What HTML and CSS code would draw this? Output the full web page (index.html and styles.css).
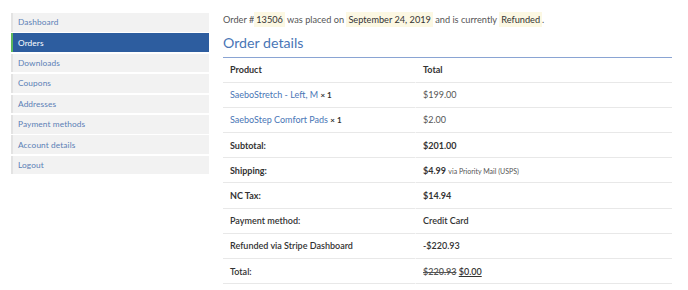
FILE: index.html
```html
<!DOCTYPE html>
<html>
<head>
<meta charset="utf-8">
<link rel="stylesheet" href="styles.css">
</head>
<body>
<div class="page">
  <nav class="side">
    <a class="item">Dashboard</a>
    <a class="item active">Orders</a>
    <a class="item">Downloads</a>
    <a class="item">Coupons</a>
    <a class="item">Addresses</a>
    <a class="item">Payment methods</a>
    <a class="item">Account details</a>
    <a class="item">Logout</a>
  </nav>
  <main class="main">
    <p class="summary">Order #<mark>13506</mark> was placed on <mark>September 24, 2019</mark> and is currently <mark>Refunded</mark>.</p>
    <h2 class="title">Order details</h2>
    <table class="details">
      <colgroup><col class="c1"><col class="c2"></colgroup>
      <thead>
        <tr><th>Product</th><th>Total</th></tr>
      </thead>
      <tbody>
        <tr><td><a class="link">SaeboStretch - Left, M</a> <strong class="qty">× 1</strong></td><td>$199.00</td></tr>
        <tr><td><a class="link">SaeboStep Comfort Pads</a> <strong class="qty">× 1</strong></td><td>$2.00</td></tr>
      </tbody>
      <tfoot>
        <tr><th>Subtotal:</th><td><b>$201.00</b></td></tr>
        <tr><th>Shipping:</th><td><b>$4.99</b> <small class="via">via Priority Mail (USPS)</small></td></tr>
        <tr><th>NC Tax:</th><td><b>$14.94</b></td></tr>
        <tr><th class="lite">Payment method:</th><td class="strong">Credit Card</td></tr>
        <tr><th class="lite">Refunded via Stripe Dashboard</th><td class="strong">-$220.93</td></tr>
        <tr><th class="lite">Total:</th><td class="strong"><del>$220.93</del> <ins>$0.00</ins></td></tr>
      </tfoot>
    </table>
  </main>
</div>
</body>
</html>
```
FILE: styles.css
```css
* { box-sizing: border-box; }
html, body { margin: 0; padding: 0; background: #fff; }
body {
  font-family: Lato, "Open Sans", sans-serif;
  font-size: 9px;
  color: #555;
}
.page {
  display: flex;
  align-items: flex-start;
  padding: 13px 16px 0 11px;
  gap: 14px;
}
.side {
  width: 198px;
  flex: none;
  display: flex;
  flex-direction: column;
  gap: 1.7px;
}
.item {
  display: flex;
  align-items: center;
  height: 18.7px;
  padding-left: 5px;
  background: #f2f2f2;
  border-left: 2px solid #e3e3e3;
  color: #5b7fb6;
  font-size: 8.3px;
  letter-spacing: 0.1px;
  text-decoration: none;
}
.item.active {
  background: #2d5d9f;
  border-left-color: #5cb85c;
  color: #fff;
}
.main {
  flex: 1;
  min-width: 0;
}
.summary {
  margin: 0;
  height: 13px;
  line-height: 13px;
  font-size: 9.2px;
  color: #555;
}
mark {
  background: #fcf8e3;
  color: #333;
  padding: 2px 2px;
}
.title {
  margin: 7.5px 0 0;
  font-weight: normal;
  font-size: 14.2px;
  line-height: 17px;
  color: #4a76b6;
}
.details {
  margin-top: 6px;
  width: 100%;
  table-layout: fixed;
  border-collapse: separate;
  border-spacing: 0;
  border-top: 1.5px solid #8aa4d3;
}
.c1 { width: 193px; }
.details th, .details td {
  text-align: left;
  height: 25.2px;
  padding: 0 7px;
  border-bottom: 1px solid #e8e8e8;
  font-size: 9px;
  vertical-align: middle;
}
.details th { color: #333; font-weight: bold; }
.details th.lite { font-weight: 600; }
.details td:first-child, .details th:first-child { border-right: 1px solid #fff; }
.details td { color: #555; }
.details b { color: #333; font-weight: bold; }
.details .strong { color: #333; font-weight: 600; }
.link { color: #4a76b6; text-decoration: none; }
.qty { color: #333; font-weight: bold; font-size: 8px; }
.via { font-size: 7px; color: #555; font-weight: normal; }
del { color: #555; }
ins { text-decoration: underline; }
```
